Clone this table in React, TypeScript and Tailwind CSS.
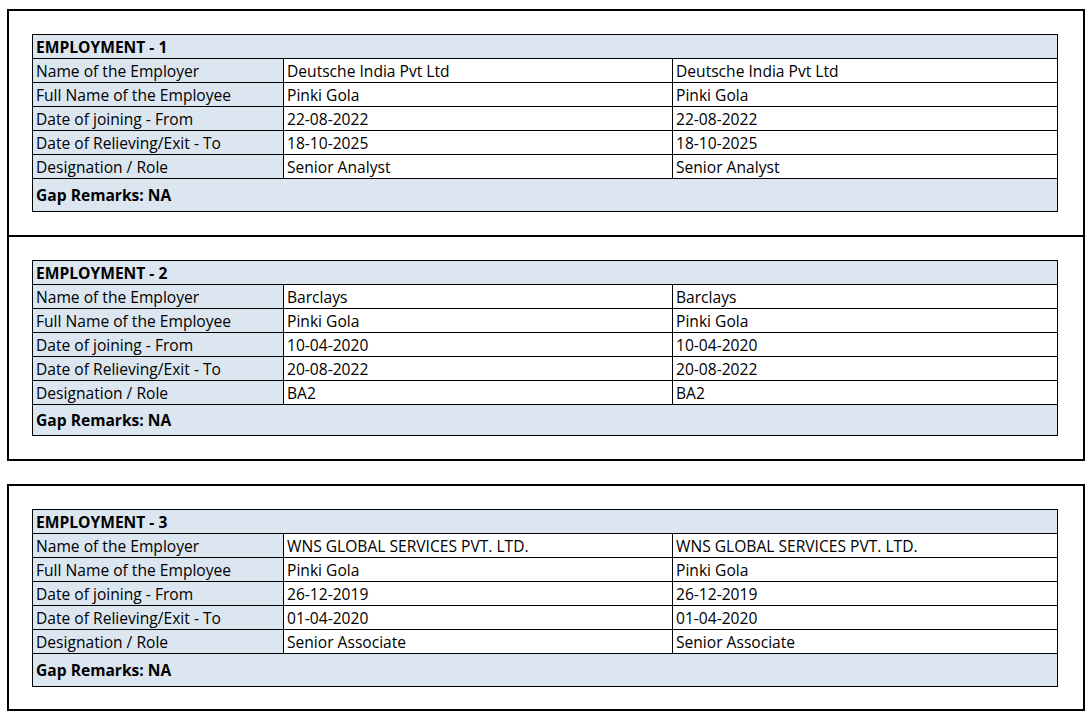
import React from "react";

interface Job {
  title: string;
  employer: string;
  name: string;
  from: string;
  to: string;
  role: string;
  remarks: string;
}

const jobs: Job[] = [
  {
    title: "EMPLOYMENT - 1",
    employer: "Deutsche India Pvt Ltd",
    name: "Pinki Gola",
    from: "22-08-2022",
    to: "18-10-2025",
    role: "Senior Analyst",
    remarks: "Gap Remarks: NA",
  },
  {
    title: "EMPLOYMENT - 2",
    employer: "Barclays",
    name: "Pinki Gola",
    from: "10-04-2020",
    to: "20-08-2022",
    role: "BA2",
    remarks: "Gap Remarks: NA",
  },
  {
    title: "EMPLOYMENT - 3",
    employer: "WNS GLOBAL SERVICES PVT. LTD.",
    name: "Pinki Gola",
    from: "26-12-2019",
    to: "01-04-2020",
    role: "Senior Associate",
    remarks: "Gap Remarks: NA",
  },
];

function Row({ label, value }: { label: string; value: string }) {
  return (
    <div className="flex h-[24px] border-b border-black">
      <div className="w-[251px] shrink-0 border-r border-black bg-[#dce6f1] pl-[3px] pt-[2px] flex items-center">
        {label}
      </div>
      <div className="w-[389px] shrink-0 border-r border-black pl-[3px] pt-[2px] flex items-center">
        {value}
      </div>
      <div className="flex-1 pl-[3px] pt-[2px] flex items-center">{value}</div>
    </div>
  );
}

function JobTable({ job, short }: { job: Job; short?: boolean }) {
  return (
    <div className="w-[1026px] border border-black">
      <div className="h-[24px] border-b border-black bg-[#dce6f1] pl-[3px] pt-[2px] flex items-center font-bold">
        {job.title}
      </div>
      <Row label="Name of the Employer" value={job.employer} />
      <Row label="Full Name of the Employee" value={job.name} />
      <Row label="Date of joining - From" value={job.from} />
      <Row label="Date of Relieving/Exit - To" value={job.to} />
      <Row label="Designation / Role" value={job.role} />
      <div
        className={
          short
            ? "h-[30px] bg-[#dce6f1] pl-[3px] pt-[1px] flex items-center font-bold"
            : "h-[32px] bg-[#dce6f1] pl-[3px] pt-[1px] flex items-center font-bold"
        }
      >
        {job.remarks}
      </div>
    </div>
  );
}

export default function App() {
  return (
    <div
      className="w-[1091px] h-[713px] bg-white text-black text-[15.6px] leading-none pl-[7px] pt-[9px] overflow-hidden"
      style={{ fontFamily: '"Open Sans", "Noto Sans", sans-serif' }}
    >
      <div className="w-[1078px] border-2 border-black pl-[23px] pt-[23px] pb-[23px]">
        <JobTable job={jobs[0]} />
      </div>
      <div className="w-[1078px] border-2 border-t-0 border-black pl-[23px] pt-[23px] pb-[23px]">
        <JobTable job={jobs[1]} short />
      </div>
      <div className="mt-[23px] w-[1078px] border-2 border-black pl-[23px] pt-[23px] pb-[22px]">
        <JobTable job={jobs[2]} />
      </div>
    </div>
  );
}
